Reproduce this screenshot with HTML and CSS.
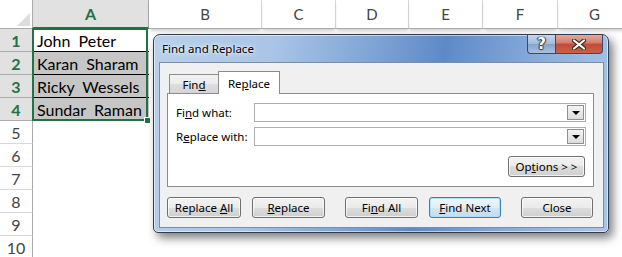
FILE: index.html
```html
<!DOCTYPE html>
<html lang="en">

<head>
    <meta charset="UTF-8">
    <title>Find and Replace</title>
    <link rel="stylesheet" href="styles.css">
</head>

<body>
    <div class="sheet">
        <div class="corner"></div>
        <div class="col-head sel">A</div>
        <div class="col-head">B</div>
        <div class="col-head">C</div>
        <div class="col-head">D</div>
        <div class="col-head">E</div>
        <div class="col-head">F</div>
        <div class="col-head">G</div>

        <div class="row-head sel">1</div>
        <div class="cell active">John  Peter</div>
        <div class="row-head sel">2</div>
        <div class="cell picked">Karan  Sharam</div>
        <div class="row-head sel">3</div>
        <div class="cell picked">Ricky  Wessels</div>
        <div class="row-head sel">4</div>
        <div class="cell picked">Sundar  Raman</div>
        <div class="row-head">5</div>
        <div class="cell"></div>
        <div class="row-head">6</div>
        <div class="cell"></div>
        <div class="row-head">7</div>
        <div class="cell"></div>
        <div class="row-head">8</div>
        <div class="cell"></div>
        <div class="row-head">9</div>
        <div class="cell"></div>
        <div class="row-head">10</div>
        <div class="cell"></div>

        <div class="selection"></div>
    </div>

    <div class="dialog">
        <div class="titlebar">
            <span class="title">Find and Replace</span>
            <div class="caption">
                <span class="cap help">?</span>
                <span class="cap close">
                    <svg width="14" height="11" viewBox="0 0 14 11">
                        <path d="M2 1.5 L12 9.5 M12 1.5 L2 9.5" stroke="#3a2a28" stroke-width="4.2" stroke-linecap="round" />
                        <path d="M2 1.5 L12 9.5 M12 1.5 L2 9.5" stroke="#fff" stroke-width="2.2" stroke-linecap="round" />
                    </svg>
                </span>
            </div>
        </div>

        <div class="client">
            <div class="tabs">
                <span class="tab">Fin<u>d</u></span>
                <span class="tab active">Re<u>p</u>lace</span>
            </div>

            <div class="panel">
                <div class="field">
                    <label>Fi<u>n</u>d what:</label>
                    <div class="combo"><span class="drop"></span></div>
                </div>
                <div class="field">
                    <label>R<u>e</u>place with:</label>
                    <div class="combo"><span class="drop"></span></div>
                </div>
                <div class="options-row">
                    <button class="btn options">Op<u>t</u>ions &gt; &gt;</button>
                </div>
            </div>

            <div class="actions">
                <button class="btn">Replace <u>A</u>ll</button>
                <button class="btn gap-s"><u>R</u>eplace</button>
                <button class="btn gap-l">Fi<u>n</u>d All</button>
                <button class="btn default gap-s"><u>F</u>ind Next</button>
                <button class="btn gap-l">Close</button>
            </div>
        </div>
    </div>
</body>

</html>
```

FILE: styles.css
```css
body {
    margin: 0;
    background: #fff;
    overflow: hidden;
}

/* spreadsheet */

.sheet {
    position: relative;
    display: grid;
    grid-template-columns: 33px 116px 113px 74px 73px 74px 75px 74px;
    grid-template-rows: 29px repeat(10, 23px);
    font-family: Lato, "Liberation Sans", sans-serif;
    font-size: 16px;
    color: #000;
}

.corner {
    position: relative;
    border-right: 1px solid #ababab;
    border-bottom: 1px solid #ababab;
}

.corner::after {
    content: "";
    position: absolute;
    right: 2px;
    bottom: 2px;
    width: 0;
    height: 0;
    border-left: 13px solid transparent;
    border-bottom: 13px solid #dcdcdc;
}

.col-head {
    display: flex;
    align-items: center;
    justify-content: center;
    color: #444;
    font-size: 15px;
    border-right: 1px solid #d8d8d8;
    border-bottom: 1px solid #ababab;
    box-shadow: 0 3px 3px -1px rgba(0, 0, 0, 0.18);
}

.col-head.sel {
    background: #e1e1e1;
    color: #217346;
    font-weight: bold;
    font-size: 16px;
    border-bottom: 2px solid #217346;
    border-right-color: #ababab;
    box-shadow: none;
}

.row-head {
    grid-column: 1;
    display: flex;
    align-items: center;
    justify-content: center;
    color: #444;
    border-right: 1px solid #ababab;
    border-bottom: 1px solid #d8d8d8;
}

.row-head.sel {
    background: #e1e1e1;
    color: #217346;
    font-weight: bold;
    border-bottom-color: #ababab;
}

.cell {
    grid-column: 2;
    display: flex;
    align-items: center;
    padding-left: 4px;
    white-space: pre;
}

.cell.active {
    background: #fff;
}

.cell.picked {
    background: #c6c6c6;
    border-top: 1px solid #000;
    margin-top: -1px;
}

.selection {
    position: absolute;
    left: 32px;
    top: 28px;
    width: 116px;
    height: 93px;
    box-sizing: border-box;
    border: 2px solid #217346;
}

.selection::after {
    content: "";
    position: absolute;
    right: -5px;
    bottom: -5px;
    width: 5px;
    height: 5px;
    background: #217346;
    border: 1px solid #fff;
}

/* dialog window */

.dialog {
    position: absolute;
    left: 153px;
    top: 34px;
    width: 445px;
    height: 193px;
    padding: 0 4px 4px 5px;
    display: flex;
    flex-direction: column;
    border: 1px solid #2f3d52;
    border-radius: 7px 7px 5px 5px;
    background: linear-gradient(100deg, #b9d0ea 0%, #a9c4e6 25%, #7fa5d6 45%, #5d8ac7 60%, #7ea4d6 75%, #9dbbe2 90%, #a9c4e6 100%);
    box-shadow: 4px 5px 10px rgba(0, 0, 0, 0.5), inset 0 0 0 1px rgba(255, 255, 255, 0.55);
    font-family: "Noto Sans", "Open Sans", sans-serif;
    font-size: 11.5px;
    color: #000;
}

.titlebar {
    height: 27px;
    display: flex;
    align-items: center;
}

.title {
    padding-left: 3px;
    text-shadow: 0 0 6px #fff, 0 0 3px rgba(255, 255, 255, 0.9);
}

.caption {
    margin-left: auto;
    margin-right: 1px;
    align-self: flex-start;
    display: flex;
    height: 19px;
}

.cap {
    display: flex;
    align-items: center;
    justify-content: center;
    border: 1px solid #3b4a62;
    border-top: none;
}

.help {
    width: 27px;
    border-radius: 0 0 0 4px;
    border-right: none;
    background: linear-gradient(#c6d6ec, #a3bada 50%, #86a2c8 50%, #a8c1e1);
    color: #fff;
    font-family: "DejaVu Sans", sans-serif;
    font-weight: bold;
    font-size: 15px;
    text-shadow: 0 0 1px #2a3442, 1px 0 1px #2a3442, -1px 0 1px #2a3442, 0 1px 1px #2a3442;
}

.close {
    width: 46px;
    border-radius: 0 0 4px 0;
    background: linear-gradient(#e6a89b, #d27c6d 45%, #c24a37 50%, #ca604d);
}

.client {
    flex: 1;
    display: flex;
    flex-direction: column;
    padding: 9px 9px 9px 7px;
    border: 1px solid #7b8ea8;
    background: #f0f0f0;
}

.tabs {
    display: flex;
    align-items: flex-end;
    height: 21px;
    margin-left: 2px;
}

.tab {
    position: relative;
    height: 18px;
    width: 48px;
    display: flex;
    align-items: center;
    justify-content: center;
    border: 1px solid #898c95;
    border-bottom: none;
    background: linear-gradient(#f3f3f3, #ebebeb 50%, #dedede 50%, #d4d4d4);
}

.tab.active {
    height: 22px;
    width: 60px;
    margin-left: -1px;
    margin-bottom: -1px;
    z-index: 1;
    background: #fff;
}

.panel {
    display: flex;
    flex-direction: column;
    padding: 9px 7px 9px 8px;
    border: 1px solid #898c95;
    background: #fff;
}

.field {
    display: flex;
    align-items: center;
    height: 19px;
}

.field + .field {
    margin-top: 5px;
}

.field label {
    width: 78px;
}

.combo {
    flex: 1;
    height: 19px;
    box-sizing: border-box;
    display: flex;
    justify-content: flex-end;
    border: 1px solid #abadb3;
    background: #fff;
}

.drop {
    width: 15px;
    margin: 1px;
    display: flex;
    align-items: center;
    justify-content: center;
    border: 1px solid #8f8f8f;
    background: linear-gradient(#f4f4f4, #dcdcdc);
}

.drop::after {
    content: "";
    border-left: 4px solid transparent;
    border-right: 4px solid transparent;
    border-top: 4px solid #000;
    margin-top: 1px;
}

.options-row {
    display: flex;
    justify-content: flex-end;
    margin-top: 10px;
    padding-right: 1px;
}

.btn {
    width: 73px;
    height: 21px;
    padding: 0;
    font: inherit;
    color: #000;
    border: 1px solid #707070;
    border-radius: 3px;
    background: linear-gradient(#f2f2f2, #ebebeb 50%, #dddddd 50%, #cfcfcf);
    box-shadow: inset 0 0 0 1px rgba(255, 255, 255, 0.7);
}

.btn.options {
    width: 77px;
}

.btn.default {
    width: 72px;
    border-color: #3c7fb1;
    background: linear-gradient(#edf6fb, #e1eef7 50%, #d2e5f2 50%, #c6dcec);
    box-shadow: inset 0 0 0 1px #aee0f7;
}

.actions {
    display: flex;
    margin-top: 10px;
}

.actions .btn:first-child {
    width: 74px;
}

.actions .btn:last-child {
    width: 72px;
}

.gap-s {
    margin-left: 11px;
}

.gap-l {
    margin-left: 20px;
}
```
